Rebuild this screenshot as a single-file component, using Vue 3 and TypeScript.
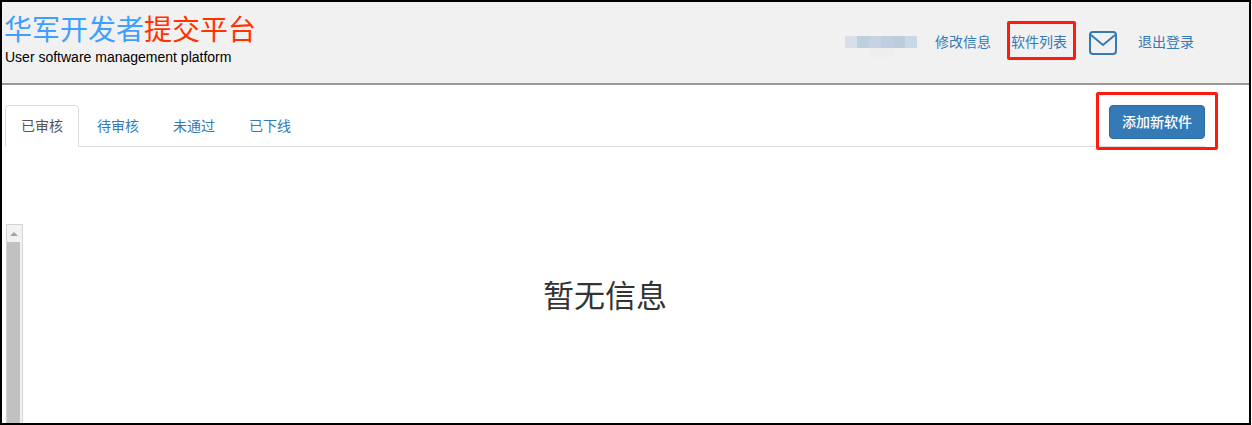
<template>
  <div class="frame">
    <header class="top-bar">
      <div class="brand">
        <h1><span class="blue">华军开发者</span><span class="red">提交平台</span></h1>
        <p>User software management platform</p>
      </div>
      <nav class="user-nav">
        <span class="user-name" aria-label="用户名"><i v-for="(c, i) in blurCells" :key="i" :style="{ background: c }"></i></span>
        <a class="edit-link">修改信息</a>
        <a class="list-link">软件列表</a>
        <svg class="mail" viewBox="0 0 28 24" width="28" height="24" fill="none" stroke="#337ab7" stroke-width="2">
          <rect x="1" y="1" width="26" height="22" rx="3"/>
          <path d="M2 4 14 14 26 4"/>
        </svg>
        <a class="logout-link">退出登录</a>
      </nav>
    </header>

    <main class="content">
      <div class="tabs-row">
        <ul class="tabs">
          <li v-for="(tab, i) in tabs" :key="tab" :class="{ active: i === 0 }">{{ tab }}</li>
        </ul>
        <div class="add-box">
          <button type="button" class="add-btn">添加新软件</button>
        </div>
      </div>

      <div class="list-area">
        <div class="scrollbar">
          <span class="arrow"></span>
          <span class="thumb"></span>
        </div>
        <div class="empty">暂无信息</div>
      </div>
    </main>
  </div>
</template>

<script setup lang="ts">
const tabs: string[] = ['已审核', '待审核', '未通过', '已下线']
// the user name is pixelated out in the screenshot
const blurCells: string[] = ['#d8dfe8', '#bccfe0', '#c5d3e2', '#bfcfe0', '#bdcbdd', '#c8d8e5']
</script>

<style>
html, body { background: #fff; }
</style>

<style scoped>
.frame {
  width: 1251px;
  height: 425px;
  box-sizing: border-box;
  border: 2px solid #000;
  overflow: hidden;
  font-family: "Liberation Sans", "Noto Sans CJK SC", sans-serif;
  font-size: 14px;
  color: #333;
  background: #fff;
}

.top-bar {
  display: flex;
  justify-content: space-between;
  height: 83px;
  box-sizing: border-box;
  padding: 10px 0 0 3px;
  background: #f1f1f1;
  border-bottom: 2px solid #999;
}
.brand h1 {
  margin: 1px 0 0 -1px;
  font-size: 28px;
  font-weight: 400;
  line-height: 36px;
}
.blue { color: #409eff; }
.red { color: #ff3300; }
.brand p {
  margin: 0;
  color: #000;
  line-height: 16px;
}

.user-nav {
  display: flex;
  align-items: flex-start;
  height: 60px;
  padding-right: 55px;
}
.user-nav a { color: #337ab7; line-height: 20px; white-space: nowrap; }
.user-name {
  position: relative;
  display: flex;
  margin: 24px 18px 0 0;
  height: 12px;
}
.user-name::after {
  content: '';
  position: absolute;
  left: 24px;
  top: 12px;
  width: 24px;
  height: 9px;
  background: #eeeeee;
}
.user-name i { width: 12px; height: 12px; }
.edit-link { margin-top: 20px; }
.list-link {
  margin: 9px 0 0 16px;
  padding: 8px 6px 5px 1px;
  border: 3px solid #ff1a0e;
  border-radius: 2px;
}
.mail { margin: 19px 0 0 13px; flex: none; }
.logout-link { margin: 20px 0 0 21px; }

.tabs-row {
  position: relative;
  display: flex;
  justify-content: space-between;
  align-items: flex-start;
  width: 1200px;
  margin: 20px 0 0 3px;
  height: 41px;
  border-bottom: 1px solid #ddd;
}
.tabs {
  display: flex;
  list-style: none;
  margin: 0;
  padding: 0;
}
.tabs li {
  height: 42px;
  box-sizing: border-box;
  padding: 10px 15px;
  margin-right: 2px;
  line-height: 20px;
  border: 1px solid transparent;
  border-radius: 4px 4px 0 0;
  color: #337ab7;
  white-space: nowrap;
}
.tabs li.active {
  color: #555;
  background: #fff;
  border-color: #ddd;
  border-bottom-color: #fff;
}

.add-box {
  position: absolute;
  top: -13px;
  right: -13px;
  padding: 10px 10px 8px;
  border: 3px solid #ff1a0e;
  border-radius: 2px;
}
.add-btn {
  display: block;
  width: 96px;
  height: 34px;
  padding: 6px 12px;
  font: inherit;
  font-weight: 500;
  line-height: 20px;
  color: #fff;
  background: #337ab7;
  border: 1px solid #2e6da4;
  border-radius: 4px;
  white-space: nowrap;
}

.list-area {
  position: relative;
  width: 1200px;
  margin-left: 3px;
  height: 276px;
}
.scrollbar {
  position: absolute;
  left: 1px;
  top: 77px;
  bottom: 0;
  width: 17px;
  box-sizing: border-box;
  padding-right: 2px;
  background: #f1f1f1;
  border: 1px solid #d4d4d4;
  border-bottom: none;
  display: flex;
  flex-direction: column;
}
.arrow {
  align-self: center;
  width: 0;
  height: 0;
  margin: 7px 0 6px;
  border: 4px solid transparent;
  border-top: none;
  border-bottom: 4px solid #a3a3a3;
}
.thumb { flex: 1; background: #c1c1c1; }
.empty {
  padding-top: 130px;
  text-align: center;
  font-size: 31px;
  line-height: 40px;
}
</style>
